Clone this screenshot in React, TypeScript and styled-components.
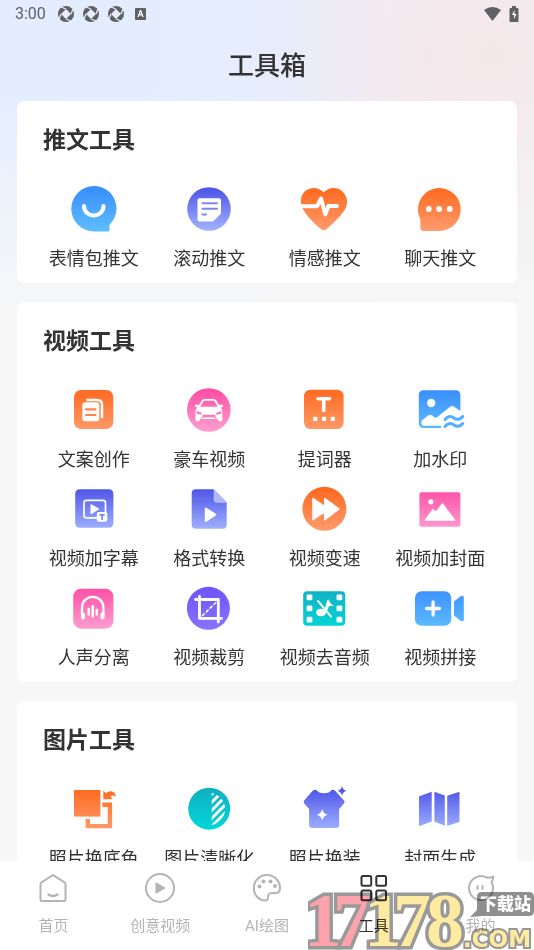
import React from "react";
import styled, { createGlobalStyle } from "styled-components";

const GlobalStyle = createGlobalStyle`
  * { box-sizing: border-box; }
  body {
    margin: 0;
    background: #f7f7f7;
    color: #333;
    font-family: Roboto, "Noto Sans CJK SC", sans-serif;
  }
`;

const Screen = styled.div`
  display: flex;
  flex-direction: column;
  height: 100vh;
  overflow: hidden;
  background:
    linear-gradient(180deg, rgba(247, 247, 247, 0) 90px, #f7f7f7 310px),
    radial-gradient(circle at 92% 55px, #f5e8eb 0, #f4e9ec 40px, rgba(240, 234, 238, 0) 200px),
    linear-gradient(90deg, #e3edff 0, #e5edfe 45%, #efebf1 75%, #f0ebee 100%);
`;

const StatusBar = styled.div`
  display: flex;
  flex: none;
  align-items: center;
  justify-content: space-between;
  height: 28px;
  padding: 0 15px;
  color: #5f6165;
`;

const StatusGroup = styled.div<{ $gap: number }>`
  display: flex;
  align-items: center;
  gap: ${(p) => p.$gap}px;
`;

const Clock = styled.span`
  margin-right: 3px;
  font-size: 16px;
  line-height: 28px;
`;

const Title = styled.h1`
  flex: none;
  margin: 0;
  padding-top: 3px;
  font-size: 26px;
  font-weight: 500;
  line-height: 70px;
  text-align: center;
`;

const Content = styled.main`
  display: flex;
  flex: 1;
  flex-direction: column;
  gap: 19px;
  min-height: 0;
  padding: 0 17px;
  overflow-y: auto;
  scrollbar-width: none;
`;

const Card = styled.section`
  flex: none;
  padding: 23px 19px 11px;
  border-radius: 7px;
  background: #fff;
`;

const CardTitle = styled.h2`
  margin: 0 0 27px;
  padding-left: 7px;
  font-size: 23px;
  font-weight: 700;
  line-height: 34px;
`;

const ToolGrid = styled.div`
  display: grid;
  grid-template-columns: repeat(4, minmax(0, 1fr));
  row-gap: 12px;
`;

const ToolButton = styled.button`
  display: flex;
  flex-direction: column;
  align-items: center;
  gap: 13px;
  padding: 0;
  border: 0;
  background: none;
  color: #333;
  font: inherit;
  font-size: 18px;
  line-height: 26px;
  white-space: nowrap;
  cursor: pointer;
`;

const ToolSvg = styled.svg`
  display: block;
  width: 48px;
  height: 48px;
  overflow: visible;
`;

const TabBar = styled.nav`
  position: relative;
  display: grid;
  flex: none;
  grid-template-columns: repeat(5, 1fr);
  height: 89px;
  background: #fff;
`;

const Tab = styled.button<{ $active?: boolean }>`
  display: flex;
  flex-direction: column;
  align-items: center;
  gap: 11px;
  padding: 11px 0 0;
  border: 0;
  background: none;
  color: ${(p) => (p.$active ? "#333" : "#b4b4b4")};
  font: inherit;
  font-size: 15px;
  line-height: 22px;
  cursor: pointer;
`;

const TabSvg = styled.svg`
  display: block;
  width: 32px;
  height: 32px;
  fill: none;
  stroke: currentColor;
  stroke-width: 2;
  stroke-linecap: round;
  stroke-linejoin: round;
`;

const SiteMark = styled.svg`
  position: absolute;
  right: 0;
  bottom: 0;
  width: 226px;
  height: 62px;
  mix-blend-mode: multiply;
  pointer-events: none;
`;

const MarkDigit = styled.text<{ $tint: string }>`
  fill: ${(p) => p.$tint};
  stroke: #999;
  stroke-width: 7px;
  paint-order: stroke;
  font-family: "Liberation Serif", serif;
  font-size: 76px;
  font-weight: 700;
`;

const gradients: Record<string, [string, string]> = {
  blue: ["#3a8fff", "#5cbcff"],
  indigo: ["#4f55e8", "#9fb0ff"],
  orange: ["#ff6a20", "#ff9a6a"],
  pink: ["#ff4fa5", "#ff9bd0"],
  teal: ["#10b0c2", "#02d6d6"],
  violet: ["#6f55fb", "#8672ff"],
};

const GradientSheet = styled.svg`
  position: absolute;
  width: 0;
  height: 0;
`;

const GradientDefs = () => (
  <GradientSheet aria-hidden="true">
    <defs>
      {Object.entries(gradients).map(([name, [from, to]]) => (
        <linearGradient key={name} id={name} gradientUnits="userSpaceOnUse" x1="0" y1="4" x2="0" y2="44">
          <stop offset="0" stopColor={from} />
          <stop offset="1" stopColor={to} />
        </linearGradient>
      ))}
    </defs>
  </GradientSheet>
);

const line = { fill: "none", strokeLinecap: "round", strokeLinejoin: "round" } as const;

const icons: Record<string, React.ReactNode> = {
  smile: (
    <>
      <path fill="url(#blue)" d="M24 1a22.500 22.500 0 0 1 15.500 38.800V45a1.500 1.500 0 0 1-1.500 1.500H24A22.700 22.700 0 0 1 24 1Z" />
      <path {...line} stroke="#fff" strokeWidth="4" d="M14 21c0 12.500 19.500 12.500 19.500 0" />
    </>
  ),
  scroll: (
    <>
      <circle cx="24" cy="24" r="21.800" fill="url(#indigo)" />
      <path fill="#fff" d="M14.500 13.300h19.500a2 2 0 0 1 2 2v13.500l-8 7.700H14.500a2 2 0 0 1-2-2V15.300a2 2 0 0 1 2-2Z" />
      <path {...line} stroke="#7b86f4" strokeWidth="2" d="M17.500 18.300h14.500M17.500 23.800h14.500M17.500 29.500h3.500" />
    </>
  ),
  heart: (
    <>
      <path fill="url(#orange)" d="M22.700 7.600C28 1.500 35.500 2 40 5.200c6.500 4.800 8 13.500 3.500 20C39 32 31 39.500 25.200 44.300q-2.400 1.900-4.800 0C14.500 39.500 7.500 33 3 26-1.700 18.800-1.300 10 5.200 5.300 10 2 17.500 1.500 22.700 7.600Z" />
      <path {...line} stroke="#fff" strokeWidth="4" d="M-1 21.200h17.200l3.800-7.700 4.300 15.800 3.200-8.200h8.500" />
    </>
  ),
  chat: (
    <>
      <path fill="url(#orange)" d="M23.200 3a21.500 21.500 0 0 1 0 43H7.400a3 3 0 0 1-3-3v-8.500A21.500 21.500 0 0 1 23.200 3Z" />
      <g fill="#fff"><circle cx="12.800" cy="24" r="2.900" /><circle cx="23.100" cy="24" r="2.900" /><circle cx="33.700" cy="24" r="2.900" /></g>
    </>
  ),
  copy: (
    <>
      <rect x="4" y="4" width="39.300" height="39" rx="7" fill="url(#orange)" />
      <path {...line} stroke="#fff" strokeWidth="2.500" d="M17.500 13.900h9.500q5 0 5 5v12" />
      <rect x="12.300" y="16.300" width="17" height="19" rx="3" fill="#fff" />
      <path {...line} stroke="#ff854a" strokeWidth="2.200" d="M16 23.300h9.500M16 29h9.500" />
    </>
  ),
  car: (
    <>
      <circle cx="23.800" cy="24" r="21.800" fill="url(#pink)" />
      <path {...line} stroke="#fff" strokeWidth="1.800" d="m13.500 22 4-7q.7-1.200 2-1.200h9q1.300 0 2 1.200l4 7" />
      <path fill="#fff" d="M10 18.800h3.500l1.500 2h18l1.500-2H38v1.700l-2.200 1.300q1.500 1.500 1.500 3.500V34q0 1.500-2 1.500t-2.500-1.800V33H15v.8q-.4 1.700-2.500 1.700t-2-1.500v-9q0-2 1.500-3.500l-2-1.200Z" />
      <path fill="#ff75ba" d="m11.500 25 5 1.800v2l-4.500-1ZM36.300 25l-5 1.800v2l4.500-1Z" />
      <path {...line} stroke="#ff75ba" strokeWidth="1.300" d="M18 29.300h12M17 32l1.500-1.500h11L31 32" />
    </>
  ),
  prompter: (
    <>
      <rect x="3" y="3.700" width="39.600" height="39.400" rx="6.500" fill="url(#orange)" />
      <path {...line} stroke="#fff" strokeWidth="3.600" d="M17 12.700h11.500M22.700 13v11.500" />
      <g fill="#fff"><rect x="12.200" y="30.700" width="4.200" height="4.200" rx=".8" /><rect x="21" y="30.700" width="4.200" height="4.200" rx=".8" /><rect x="29.700" y="30.700" width="4.200" height="4.200" rx=".8" /></g>
    </>
  ),
  watermark: (
    <>
      <path fill="url(#blue)" d="M7.300 4.300h32.600a4.500 4.500 0 0 1 4.500 4.500V25l-6.600-4.400q-2-1.300-4 .4L21 31.300q-1.300 1-2.600 0l-2.600-2q-1.700-1.300-3.200 0L6.400 34q-1 .7-1 2v1.500q0 2.200 2.200 2.200h16.500q1 0 1 1.200t-1 1.200H7.300a4.500 4.500 0 0 1-4.500-4.500V8.800a4.500 4.500 0 0 1 4.500-4.500Z" />
      <circle cx="15.200" cy="17" r="4.200" fill="#fff" />
      <path {...line} stroke="#fff" strokeWidth="6" d="M29 33.500q4-5 9 0t9-2" />
      <path {...line} stroke="#54b0ff" strokeWidth="3" d="M29 33.500c3-4 6.500-3.500 9-1.500s6 2 8.700-1.500M29 40.500c3-4 6.500-3.500 9-1.500s6 2 8.700-1.500" />
    </>
  ),
  subtitle: (
    <>
      <rect x="5.200" y="4.300" width="38.200" height="38.400" rx="4.500" fill="url(#indigo)" />
      <rect x="14" y="15.300" width="21.500" height="17.500" rx="2.500" fill="none" stroke="#fff" strokeWidth="1.700" />
      <path fill="#fff" stroke="#fff" strokeLinejoin="round" d="m21 19.500 7.800 4.500-7.800 4.800Z" />
      <rect x="26.800" y="27" width="10.500" height="9.800" rx="2" fill="#fff" />
      <path fill="none" stroke="#7985f3" strokeWidth="1.700" d="M29.500 29.800h5.200M32.100 30v5" />
    </>
  ),
  convert: (
    <>
      <path fill="url(#indigo)" d="M10.700 4.300h18l13 13.200v22.300a4 4 0 0 1-4 4h-27a4 4 0 0 1-4-4V8.300a4 4 0 0 1 4-4Z" />
      <path fill="#b1b9ff" d="m28.700 4.300 13 13.400h-9.500a3.500 3.500 0 0 1-3.500-3.500Z" />
      <path fill="#fff" stroke="#fff" strokeWidth="2" strokeLinejoin="round" d="m20.800 23.500 9.400 6.200-9.400 6.200Z" />
    </>
  ),
  speed: (
    <>
      <circle cx="23.400" cy="23.800" r="22" fill="url(#orange)" />
      <path fill="#fff" stroke="#fff" strokeWidth="1.500" strokeLinejoin="round" d="m12 13.500 11.800 8.200v-8.200L38 24 23.800 34.700v-8L12 34.700Z" />
    </>
  ),
  cover: (
    <>
      <rect x="3.400" y="7.300" width="41" height="34.400" rx="2.500" fill="url(#pink)" />
      <circle cx="14.800" cy="16.800" r="2.600" fill="#fff" />
      <path fill="#fff" stroke="#fff" strokeLinejoin="round" d="m9 35.200 8-11 3 2.800 6.400-8.500L39 35.200Z" />
    </>
  ),
  voice: (
    <>
      <rect x="3.200" y="4.700" width="40.200" height="40" rx="8" fill="url(#pink)" />
      <path {...line} stroke="#fff" strokeWidth="2.300" d="M12 31v-7.500a10.700 10.700 0 0 1 21.400 0V31" />
      <path {...line} stroke="#fff" strokeWidth="4" d="M13 30.500v3M32.500 30.500v3" />
      <path {...line} stroke="#fff" strokeWidth="2.500" d="M18.700 25v5.500M22.700 22.300v10M26.800 26v4.500" />
    </>
  ),
  crop: (
    <>
      <circle cx="23.400" cy="24.300" r="21.500" fill="url(#violet)" />
      <path {...line} stroke="#fff" strokeWidth="2.800" d="M10.500 15.500h22.800V38M14.500 12.300v22H36.500" />
      <path {...line} stroke="#fff" strokeWidth="1.600" strokeDasharray="2.500 2.800" d="m17.500 31.500 14-13.500" />
    </>
  ),
  mute: (
    <>
      <rect x="2.200" y="7.300" width="42" height="34.400" rx="4" fill="url(#teal)" />
      <g fill="#fff">
        {[10.5, 21.5, 32.7].map((y) => (
          <React.Fragment key={y}><rect x="5.600" y={y} width="5.800" height="5.800" rx="1.300" /><rect x="35.500" y={y} width="5.800" height="5.800" rx="1.300" /></React.Fragment>
        ))}
        <ellipse cx="20" cy="28.500" rx="5" ry="3.800" />
        <path d="m26.300 16 1.500-.3q1 4 5.200 6.300h-4.800l-3.300 7-2-1Z" />
      </g>
      <path {...line} stroke="#e8fafa" strokeWidth="2" d="m17 17 13 15.500" />
    </>
  ),
  join: (
    <>
      <rect x="-1" y="7.300" width="36.200" height="34.400" rx="6.500" fill="url(#blue)" />
      <path {...line} stroke="#fff" strokeWidth="3.300" d="M10.500 24.500h13M17.100 18v13" />
      <path fill="url(#blue)" d="m38 17.500 6.500-5.200q3.300-1.600 3.300 1.500v21.500q0 3.100-3.300 1.500L38 31.500Z" />
    </>
  ),
  backdrop: (
    <>
      <path fill="url(#orange)" d="M4 5h26.400v26.600H4Z" />
      <path fill="url(#orange)" d="M15.600 34H20v5h17.700V22h-5.300v-4.500h9.700v25.800H15.600ZM33.300 5.700l2.800 2.500q4-3.500 8.200-.4 2.200 1.800 1.200 4.200-2-2.700-5.200-.5l2.500 2.700h-9.500Z" />
    </>
  ),
  clarity: (
    <>
      <circle cx="24.200" cy="23.700" r="21" fill="url(#teal)" />
      <clipPath id="lens"><path d="M26.700 8a17 17 0 0 1 13.500 15.700A17 17 0 0 1 26.700 40Z" /></clipPath>
      <g clipPath="url(#lens)" stroke="#fff" strokeWidth="3" fill="none"><path d="m22 14 12-12M22 22 42 2M22 30 44 8M22 38l22-22M22 46l22-22" /></g>
    </>
  ),
  outfit: (
    <>
      <path fill="url(#indigo)" d="m13 5 2.200-.3q2.300 3.600 7.800 3.600t7.700-3.600L33 5q.8.300 1.500 1.200l8.500 9.300q1 1.300.1 2.700l-5 5.700v16q0 3-3 3h-24q-3 0-3-3V24l-5-5.700q-1-1.400 0-2.700l8.200-9.300Q12 5.300 13 5Z" />
      <path fill="#fff" d="M21.200 24q1 4.600 5.500 5.700-4.500 1.200-5.500 5.800-1-4.600-5.500-5.800 4.500-1.100 5.500-5.700Z" />
      <path fill="#5158e9" d="M41 1q.8 3.900 4.600 4.800-3.800 1-4.600 4.900-.8-3.900-4.600-4.900Q40.200 4.900 41 1Z" />
    </>
  ),
  fold: (
    <path fill="url(#indigo)" d="m3.500 11.200 12.200-4.500v29.800L3.500 41Q3 41 3 40V12q0-.6.500-.8ZM18.400 6.700l10.400 3.900v30.200L18.400 36.600ZM31.200 10.800l11.500-3.900q.8 0 .8.700v28.500q0 .7-.6.900l-11.700 4Z" />
  ),
};

const sections = [
  { title: "推文工具", tools: [["smile", "表情包推文"], ["scroll", "滚动推文"], ["heart", "情感推文"], ["chat", "聊天推文"]] },
  {
    title: "视频工具",
    tools: [
      ["copy", "文案创作"], ["car", "豪车视频"], ["prompter", "提词器"], ["watermark", "加水印"],
      ["subtitle", "视频加字幕"], ["convert", "格式转换"], ["speed", "视频变速"], ["cover", "视频加封面"],
      ["voice", "人声分离"], ["crop", "视频裁剪"], ["mute", "视频去音频"], ["join", "视频拼接"],
    ],
  },
  { title: "图片工具", tools: [["backdrop", "照片换底色"], ["clarity", "图片清晰化"], ["outfit", "照片换装"], ["fold", "封面生成"]] },
];

const tabs = [
  { label: "首页", icon: <><path d="m16 3 11.500 7.300q1 .7 1 2V27.500q0 1.500-1.500 1.500H5q-1.500 0-1.500-1.500V12.300q0-1.300 1-2Z" /><path strokeWidth="2.500" d="M11.500 22.500q4.500 3 9 0" /></> },
  { label: "创意视频", icon: <><circle cx="16" cy="16" r="14" /><path fill="currentColor" stroke="none" d="m11.500 10 10.500 6-10.500 6Z" /></> },
  { label: "AI绘图", icon: <><path d="M16 3C9 3 2.800 8.500 2.800 16S8.500 28.500 14 28.500c4.500 0 2-3.500 3.500-6 1.800-2.700 5-1 8-1.500 3-.6 3.800-3 3.500-6C28.500 8.500 23 3 16 3Z" /><g fill="currentColor" stroke="none"><circle cx="12.500" cy="9.500" r="2" /><circle cx="19.500" cy="9.500" r="2" /><circle cx="24" cy="14" r="2" /><circle cx="8.500" cy="14.500" r="2" /></g></> },
  { label: "工具", active: true, icon: <><rect x="3.500" y="4" width="9.700" height="9.700" rx="1.500" /><rect x="18.300" y="4" width="9.700" height="9.700" rx="1.500" /><rect x="3.500" y="18.500" width="9.700" height="9.700" rx="1.500" /><rect x="18.300" y="18.500" width="9.700" height="9.700" rx="1.500" /></> },
  { label: "我的", icon: <><path d="M21.500 5.500q3 1 7-1-.2 3.500-2 5.500 1.500 2.700 1.500 6a12 12 0 1 1-6.500-10.500Z" /><path d="M12.500 14v3M17.500 14v3" /></> },
];

const Shutter = () => (
  <svg width="16" height="16" viewBox="0 0 16 16" aria-hidden="true">
    <circle cx="8" cy="8" r="8" fill="currentColor" />
    <path fill="#e5edfe" d="M8 3 13 8 8 13 3 8Z" />
    <path stroke="#e5edfe" strokeWidth="1.300" d="M8 3 3 1M13 8l2-5M8 13l5 2M3 8l-2 5" />
  </svg>
);

const digits = [
  { char: "1", x: -4, tint: "#fea3ab" },
  { char: "7", x: 25, tint: "#fea3ab" },
  { char: "1", x: 56, tint: "#feeaa0" },
  { char: "7", x: 85, tint: "#feeaa0" },
  { char: "8", x: 118, tint: "#feeaa0" },
];

export default function App() {
  return (
    <Screen>
      <GlobalStyle />
      <GradientDefs />
      <StatusBar>
        <StatusGroup $gap={9}>
          <Clock>3:00</Clock>
          <Shutter />
          <Shutter />
          <Shutter />
          <svg width="16" height="12" viewBox="0 0 16 12" aria-hidden="true">
            <rect x="2" width="11" height="12" rx="1" fill="currentColor" />
            <text x="7.500" y="9" textAnchor="middle" fill="#fff" fontFamily="Roboto, sans-serif" fontSize="9" fontWeight="700">A</text>
          </svg>
        </StatusGroup>
        <StatusGroup $gap={8}>
          <svg width="17" height="14" viewBox="0 0 17 14" aria-hidden="true"><path fill="currentColor" d="M0 3Q8.500-3 17 3L8.500 14Z" /></svg>
          <svg width="10" height="16" viewBox="0 0 10 16" aria-hidden="true">
            <path fill="currentColor" d="M3 0h4v2h1.500Q9.500 2 9.500 3v12q0 1-1 1h-7q-1 0-1-1V3q0-1 1-1H3Z" />
            <path fill="#fff" d="M5.500 4 3 9h2v4l2.500-5h-2Z" />
          </svg>
        </StatusGroup>
      </StatusBar>
      <Title>工具箱</Title>
      <Content>
        {sections.map((section) => (
          <Card key={section.title}>
            <CardTitle>{section.title}</CardTitle>
            <ToolGrid>
              {section.tools.map(([icon, label]) => (
                <ToolButton key={label} type="button">
                  <ToolSvg viewBox="0 0 48 48" aria-hidden="true">{icons[icon]}</ToolSvg>
                  {label}
                </ToolButton>
              ))}
            </ToolGrid>
          </Card>
        ))}
      </Content>
      <TabBar>
        {tabs.map((tab) => (
          <Tab key={tab.label} type="button" $active={tab.active} aria-current={tab.active ? "page" : undefined}>
            <TabSvg viewBox="0 0 32 32" aria-hidden="true">{tab.icon}</TabSvg>
            {tab.label}
          </Tab>
        ))}
        <SiteMark viewBox="0 0 226 62">
          {digits.map((digit) => (
            <MarkDigit key={digit.x} x={digit.x} y="58" $tint={digit.tint}>{digit.char}</MarkDigit>
          ))}
          <path fill="#8f8f8f" d="M174 4h47q5 0 5 5v14q0 5-5 5h-47l-12 1 7-7V9q0-5 5-5Z" />
          <text x="172" y="22" fill="#fff" fontFamily='"Noto Sans CJK SC", sans-serif' fontWeight="900" fontSize="17">下载站</text>
          <text x="155" y="59" fill="#feeaa0" stroke="#999" strokeWidth="4" paintOrder="stroke" fontFamily='"DejaVu Sans", sans-serif' fontWeight="700" fontSize="23">.COM</text>
        </SiteMark>
      </TabBar>
    </Screen>
  );
}
